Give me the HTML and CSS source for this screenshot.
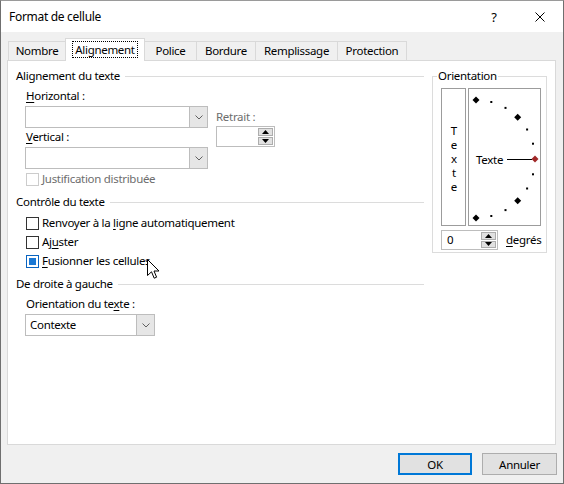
FILE: index.html
```html
<!DOCTYPE html>
<html lang="fr">
<head>
<meta charset="utf-8">
<title>Format de cellule</title>
<link rel="stylesheet" href="styles.css">
</head>
<body>
<div class="window">
  <div class="titlebar">
    <div class="title">Format de cellule</div>
    <div class="capbtn help">?</div>
    <div class="capbtn close">
      <svg width="10" height="10" viewBox="0 0 10 10"><path d="M0.5 0.5 L9.5 9.5 M9.5 0.5 L0.5 9.5" stroke="#000" stroke-width="1" fill="none"/></svg>
    </div>
  </div>
  <div class="body">
    <div class="tabs">
      <div class="tab t-nombre">Nombre</div>
      <div class="tab t-align active"><span class="focus">Alignement</span></div>
      <div class="tab t-police">Police</div>
      <div class="tab t-bordure">Bordure</div>
      <div class="tab t-rempl">Remplissage</div>
      <div class="tab t-prot">Protection</div>
    </div>
    <div class="panel">
      <div class="leftcol">
        <div class="head">Alignement du texte</div>
        <div class="align">
          <div class="align-left">
            <div class="label"><u>H</u>orizontal :</div>
            <div class="combo wide">
              <div class="field"></div>
              <div class="arrow"><svg width="8" height="5" viewBox="0 0 8 5"><path d="M0.5 0.5 L4 4 L7.5 0.5" stroke="#606060" fill="none"/></svg></div>
            </div>
            <div class="label l2"><u>V</u>ertical :</div>
            <div class="combo wide">
              <div class="field"></div>
              <div class="arrow"><svg width="8" height="5" viewBox="0 0 8 5"><path d="M0.5 0.5 L4 4 L7.5 0.5" stroke="#606060" fill="none"/></svg></div>
            </div>
          </div>
          <div class="align-right">
            <div class="label disabled">Retrait :</div>
            <div class="spin retrait">
              <div class="field"></div>
              <div class="spinbtns">
                <div class="sb"><svg width="7" height="4" viewBox="0 0 7 4"><path d="M3.5 0 L7 4 L0 4 Z" fill="#000"/></svg></div>
                <div class="sb"><svg width="7" height="4" viewBox="0 0 7 4"><path d="M0 0 L7 0 L3.5 4 Z" fill="#000"/></svg></div>
              </div>
            </div>
          </div>
        </div>
        <div class="check justif disabled"><span class="box dis"></span><span>Justification distribuée</span></div>

        <div class="head h2">Contrôle du texte</div>
        <div class="check first"><span class="box"></span><span>Renvoyer à la <u>l</u>igne automatiquement</span></div>
        <div class="check"><span class="box"></span><span>Aj<u>u</u>ster</span></div>
        <div class="check"><span class="box mixed"><span class="fill"></span></span><span><u>F</u>usionner les cellules</span></div>

        <div class="head h2">De droite à gauche</div>
        <div class="label l3">Orientation du te<u>x</u>te :</div>
        <div class="combo narrow">
          <div class="field">Contexte</div>
          <div class="arrow"><svg width="8" height="5" viewBox="0 0 8 5"><path d="M0.5 0.5 L4 4 L7.5 0.5" stroke="#606060" fill="none"/></svg></div>
        </div>
      </div>

      <fieldset class="orient">
        <legend>Orientation</legend>
        <div class="orient-top">
          <div class="vbox"><span class="vtext">Texte</span></div>
          <div class="dial">
            <svg width="71" height="136" viewBox="-1 -1 71 136">
              <g fill="#000">
                <polygon points="6,6.5 9.5,10 6,13.5 2.5,10"/>
                <polygon points="47.7,23.8 51.2,27.3 47.7,30.8 44.2,27.3"/>
                <polygon points="47.7,107.2 51.2,110.7 47.7,114.2 44.2,110.7"/>
                <polygon points="6,124.5 9.5,128 6,131.5 2.5,128"/>
                <rect x="20.3" y="11" width="2" height="2"/>
                <rect x="34.5" y="16.9" width="2" height="2"/>
                <rect x="56.1" y="38.5" width="2" height="2"/>
                <rect x="62" y="52.7" width="2" height="2"/>
                <rect x="62" y="83.3" width="2" height="2"/>
                <rect x="56.1" y="97.5" width="2" height="2"/>
                <rect x="34.5" y="119.1" width="2" height="2"/>
                <rect x="20.3" y="125" width="2" height="2"/>
              </g>
              <line x1="37" y1="69.5" x2="62" y2="69.5" stroke="#000" stroke-width="1"/>
              <polygon points="65,65.5 68.5,69 65,72.5 61.5,69" fill="#a02828"/>
              <text x="6" y="73.5" class="dialtext">Texte</text>
            </svg>
          </div>
        </div>
        <div class="orient-bottom">
          <div class="spin deg">
            <div class="field">0</div>
            <div class="spinbtns">
              <div class="sb"><svg width="7" height="4" viewBox="0 0 7 4"><path d="M3.5 0 L7 4 L0 4 Z" fill="#000"/></svg></div>
              <div class="sb"><svg width="7" height="4" viewBox="0 0 7 4"><path d="M0 0 L7 0 L3.5 4 Z" fill="#000"/></svg></div>
            </div>
          </div>
          <div class="deglabel"><u>d</u>egrés</div>
        </div>
      </fieldset>
    </div>
    <div class="footer">
      <div class="btn default">OK</div>
      <div class="btn">Annuler</div>
    </div>
  </div>
  <svg class="cursor" width="13" height="21" viewBox="0 0 13 21">
    <path d="M0.5 0.5 L0.5 16.5 L4.5 12.8 L7.2 19.2 L9.6 18.2 L7 12 L12 12 Z" fill="#fff" stroke="#000" stroke-width="1" stroke-linejoin="miter"/>
  </svg>
</div>
</body>
</html>
```

FILE: styles.css
```css
* { box-sizing: border-box; }
html, body { margin: 0; padding: 0; }
body {
  width: 564px;
  height: 484px;
  overflow: hidden;
  font-family: "Noto Sans", "Open Sans", sans-serif;
  font-size: 11.5px;
  letter-spacing: -0.3px;
  color: #000;
}
u { text-decoration: underline; text-underline-offset: 2px; }

.window {
  position: relative;
  width: 564px;
  height: 484px;
  border: 1px solid #6f6f6f;
  border-top-color: #9a9a9a;
  background: #f0f0f0;
  display: flex;
  flex-direction: column;
}

.titlebar {
  height: 31px;
  background: #fff;
  display: flex;
  align-items: center;
  padding-left: 8px;
}
.title { flex: 1; line-height: 16px; font-size: 12px; }
.capbtn {
  width: 46px;
  height: 31px;
  display: flex;
  align-items: center;
  justify-content: center;
  font-size: 13px;
}

.body {
  flex: 1;
  display: flex;
  flex-direction: column;
  padding: 6px 7px 0 6px;
}

.tabs {
  position: relative;
  z-index: 1;
  display: flex;
  align-items: flex-end;
  height: 22px;
  padding-left: 1px;
}
.tab {
  height: 19px;
  margin-right: -1px;
  border: 1px solid #d9d9d9;
  border-bottom: none;
  background: #f0f0f0;
  display: flex;
  align-items: center;
  justify-content: center;
  line-height: 16px;
}
.tab.active {
  height: 23px;
  margin-bottom: -1px;
  background: #fff;
  position: relative;
  z-index: 2;
  padding-bottom: 2px;
}
.focus { border: 1px dotted #000; padding: 0 2px; line-height: 15px; }
.t-nombre { width: 58px; }
.t-align { width: 80px; }
.t-police { width: 53px; }
.t-bordure { width: 60px; }
.t-rempl { width: 83px; }
.t-prot { width: 70px; }

.panel {
  height: 385px;
  background: #fff;
  border: 1px solid #d9d9d9;
  display: flex;
  align-items: flex-start;
  gap: 8px;
  padding: 7px 8px 0 8px;
}

.leftcol { width: 408px; display: flex; flex-direction: column; }

.head {
  display: flex;
  align-items: center;
  height: 16px;
  line-height: 16px;
  white-space: nowrap;
}
.head::after {
  content: "";
  flex: 1;
  height: 1px;
  background: #dcdcdc;
  margin-left: 5px;
}
.h2 { margin-top: 7px; }

.label { height: 16px; line-height: 16px; padding-left: 1px; white-space: nowrap; }
.disabled { color: #6d6d6d; }

.align { display: flex; gap: 8px; padding-left: 9px; margin-top: 4px; }
.align-left { width: 183px; display: flex; flex-direction: column; }
.align-left .combo { margin-top: 2px; }
.align-left .l2 { margin-top: 1px; }
.align-right { padding-top: 21px; display: flex; flex-direction: column; }
.align-right .label { padding-left: 0; }
.retrait { margin-top: 1px; width: 59px; height: 21px; }

.combo {
  display: flex;
  height: 22px;
  border: 1px solid #bdbdbd;
  background: #fff;
}
.combo.wide { width: 183px; }
.combo.narrow { width: 130px; margin-left: 9px; margin-top: 2px; }
.combo .field { flex: 1; padding-left: 4px; line-height: 20px; }
.combo .arrow {
  width: 18px;
  background: #e6e6e6;
  border-left: 1px solid #bdbdbd;
  display: flex;
  align-items: center;
  justify-content: center;
}
.l3 { margin-top: 4px; padding-left: 10px; }

.spin {
  display: flex;
  border: 1px solid #bdbdbd;
  background: #fff;
}
.spin .field { flex: 1; padding-left: 5px; line-height: 18px; }
.spinbtns {
  width: 16px;
  display: flex;
  flex-direction: column;
  padding: 1px 1px 1px 0;
  gap: 1px;
}
.sb {
  flex: 1;
  background: #e1e1e1;
  border: 1px solid #adadad;
  display: flex;
  align-items: center;
  justify-content: center;
}

.check {
  display: flex;
  align-items: center;
  height: 16px;
  line-height: 16px;
  padding-left: 10px;
  gap: 3px;
  margin-top: 3px;
  white-space: nowrap;
}
.check.first { margin-top: 5px; }
.check.justif { margin-top: 2px; }
.box {
  width: 13px;
  height: 13px;
  border: 1px solid #333;
  background: #fff;
  flex: none;
  display: flex;
  align-items: center;
  justify-content: center;
}
.box.dis { border-color: #cccccc; }
.box.mixed { border-color: #0a64c0; }
.box .fill { width: 7px; height: 7px; background: #1a78d4; }

fieldset.orient {
  margin: 0;
  width: 115px;
  height: 185px;
  border: 1px solid #dcdcdc;
  padding: 4px 0 0 8px;
  min-inline-size: 0;
}
fieldset.orient legend {
  padding: 0 1px;
  margin-left: -4px;
  line-height: 16px;
}
.orient-top { display: flex; gap: 2px; }
.vbox {
  width: 25px;
  height: 138px;
  border: 1px solid #9c9c9c;
  display: flex;
  align-items: center;
  justify-content: center;
  padding-top: 3px;
}
.vtext {
  writing-mode: vertical-rl;
  text-orientation: upright;
  letter-spacing: -0.9px;
  line-height: 16px;
}
.dial {
  width: 73px;
  height: 138px;
  border: 1px solid #9c9c9c;
}
.dial svg { display: block; }
.dialtext { font-family: "Noto Sans", "Open Sans", sans-serif; font-size: 11.5px; letter-spacing: -0.3px; fill: #000; }

.orient-bottom { display: flex; align-items: center; gap: 8px; margin-top: 4px; }
.deg { width: 57px; height: 20px; }
.deglabel { line-height: 16px; }

.footer {
  display: flex;
  justify-content: flex-end;
  gap: 10px;
  padding-top: 8px;
  margin-right: -1px;
}
.btn {
  width: 75px;
  height: 22px;
  background: #e1e1e1;
  border: 1px solid #adadad;
  display: flex;
  align-items: center;
  justify-content: center;
}
.btn.default { width: 74px; border: 2px solid #0078d7; }

.cursor {
  position: absolute;
  left: 146px;
  top: 258px;
}
```
